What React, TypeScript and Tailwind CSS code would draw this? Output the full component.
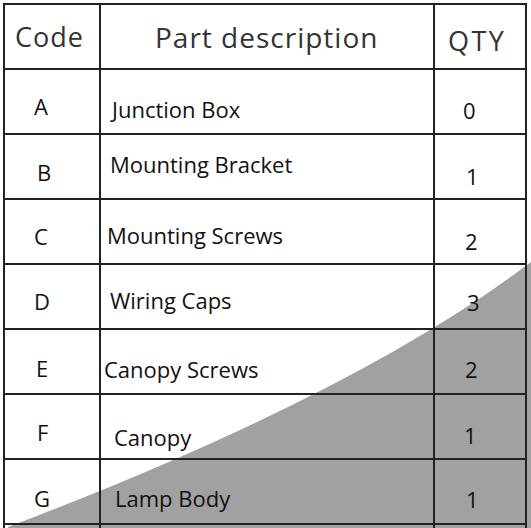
type Row = {
  code: string;
  desc: string;
  qty: string;
  codePad: string;
  descPad: string;
  qtyPad: string;
};

const rows: Row[] = [
  { code: "A", desc: "Junction Box", qty: "0", codePad: "pl-[29px] pt-[25px]", descPad: "pl-[11px] pt-[28px]", qtyPad: "pl-[28px] pt-[29px]" },
  { code: "B", desc: "Mounting Bracket", qty: "1", codePad: "pl-[32px] pt-[26px]", descPad: "pl-[9px] pt-[18px]", qtyPad: "pl-[31px] pt-[30px]" },
  { code: "C", desc: "Mounting Screws", qty: "2", codePad: "pl-[29px] pt-[25px]", descPad: "pl-[6px] pt-[24px]", qtyPad: "pl-[30px] pt-[30px]" },
  { code: "D", desc: "Wiring Caps", qty: "3", codePad: "pl-[29px] pt-[25px]", descPad: "pl-[9px] pt-[24px]", qtyPad: "pl-[32px] pt-[26px]" },
  { code: "E", desc: "Canopy Screws", qty: "2", codePad: "pl-[31px] pt-[27px]", descPad: "pl-[3px] pt-[28px]", qtyPad: "pl-[30px] pt-[28px]" },
  { code: "F", desc: "Canopy", qty: "1", codePad: "pl-[32px] pt-[26px]", descPad: "pl-[13px] pt-[31px]", qtyPad: "pl-[29px] pt-[29px]" },
  { code: "G", desc: "Lamp Body", qty: "1", codePad: "pl-[29px] pt-[27px]", descPad: "pl-[14px] pt-[27px]", qtyPad: "pl-[31px] pt-[28px]" },
];

const cell = "h-[65px] border-r-2 border-b-2 border-[#222] flex items-start";
const body = "text-[22px] leading-[22px] text-[#111] whitespace-nowrap";

export default function App() {
  return (
    <div
      className="relative h-[528px] w-[531px] overflow-hidden bg-white"
      style={{ fontFamily: '"Open Sans", "Noto Sans", sans-serif' }}
    >
      {/* grey wedge behind the grid */}
      <svg className="absolute inset-0" width="531" height="528" viewBox="0 0 531 528">
        <path d="M 8 527 Q 354.5 395.5 531 262 L 531 528 L 8 528 Z" fill="#a1a1a1" />
      </svg>

      <div className="relative pl-[3px] pt-[3px]">
        <div className="grid w-[524px] grid-cols-[96px_334px_92px] border-l-2 border-t-2 border-[#222]">
          <div className={cell + " pl-[10px] pt-[18px]"}>
            <span className="text-[27px] leading-[27px] tracking-[1px] text-[#333]">Code</span>
          </div>
          <div className={cell + " pl-[54px] pt-[18px]"}>
            <span className="text-[28px] leading-[28px] tracking-[1px] text-[#333]">Part description</span>
          </div>
          <div className={cell + " pl-[13px] pt-[22px]"}>
            <span className="text-[27px] leading-[27px] tracking-[2.5px] text-[#333]">QTY</span>
          </div>

          {rows.map((r) => (
            <div key={r.code} className="contents">
              <div className={cell + " " + r.codePad}>
                <span className={body}>{r.code}</span>
              </div>
              <div className={cell + " " + r.descPad}>
                <span className={body}>{r.desc}</span>
              </div>
              <div className={cell + " " + r.qtyPad}>
                <span className={body}>{r.qty}</span>
              </div>
            </div>
          ))}

          <div className="h-[3px] border-r-2 border-[#222]" />
          <div className="h-[3px] border-r-2 border-[#222]" />
          <div className="h-[3px] border-r-2 border-[#222]" />
        </div>
      </div>
    </div>
  );
}
